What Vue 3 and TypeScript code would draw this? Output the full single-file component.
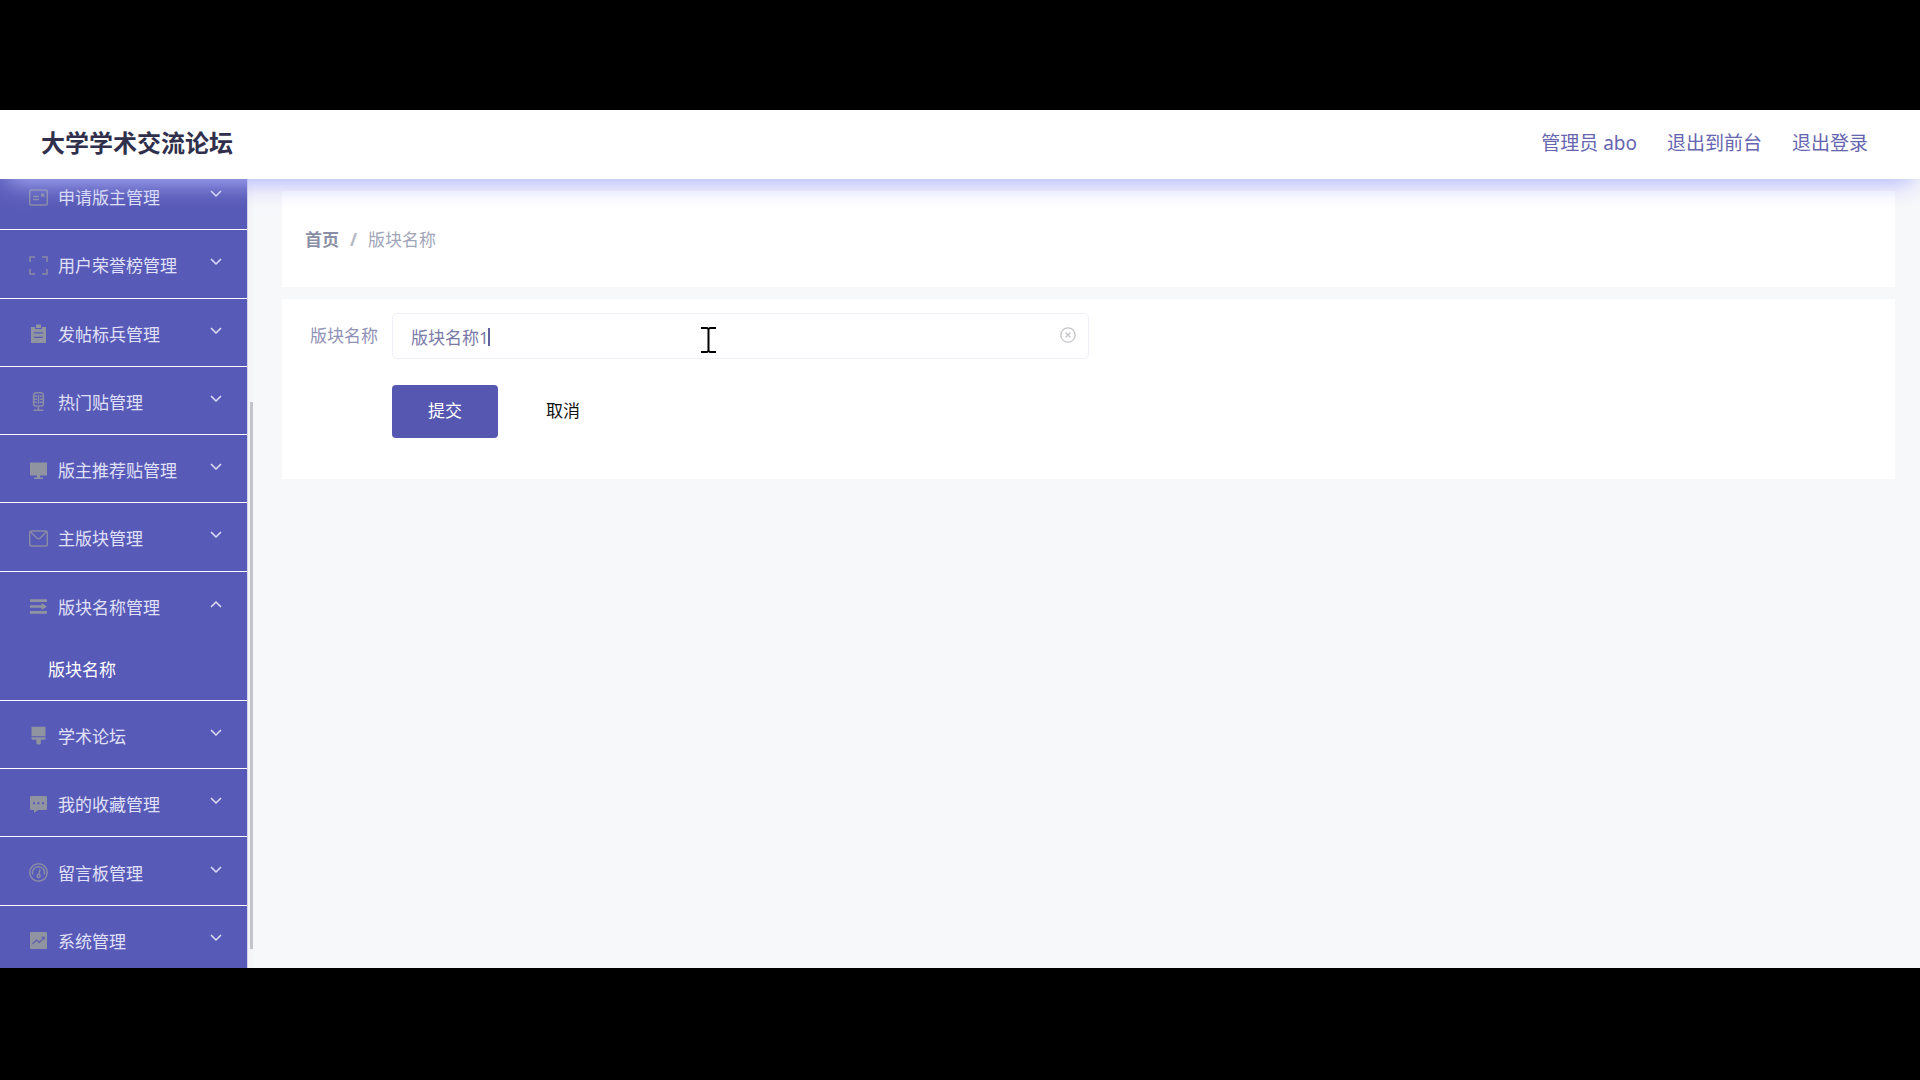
<script setup lang="ts">
import { ref } from 'vue'

interface MenuItem {
  title: string
  icon: string
  children?: string[]
}

const menu = ref<MenuItem[]>([
  { title: '申请版主管理', icon: 'postcard' },
  { title: '用户荣誉榜管理', icon: 'fullscreen' },
  { title: '发帖标兵管理', icon: 'order' },
  { title: '热门贴管理', icon: 'microphone' },
  { title: '版主推荐贴管理', icon: 'platform' },
  { title: '主版块管理', icon: 'message' },
  { title: '版块名称管理', icon: 'unfold', children: ['版块名称'] },
  { title: '学术论坛', icon: 'brush' },
  { title: '我的收藏管理', icon: 'comment' },
  { title: '留言板管理', icon: 'odometer' },
  { title: '系统管理', icon: 'marketing' },
])

const sectionName = ref('版块名称1')
</script>

<template>
  <div class="page">
    <div class="app">
      <header class="header">
        <h1 class="brand">大学学术交流论坛</h1>
        <nav class="links">
          <a href="#">管理员 abo</a>
          <a href="#">退出到前台</a>
          <a href="#">退出登录</a>
        </nav>
      </header>

      <div class="body">
        <aside class="sidebar">
          <ul class="menu">
            <li v-for="item in menu" :key="item.title" class="menu-item">
              <button type="button" class="menu-title" :aria-expanded="!!item.children">
                <svg class="icon" viewBox="0 0 19 19" aria-hidden="true">
                  <g v-if="item.icon === 'postcard'" class="line">
                    <rect x="0.7" y="2" width="17.6" height="15" rx="1.5" />
                    <path d="M4 8.5h6M4 11.5h6M12.8 6.2h1.8v1.8h-1.8z" />
                  </g>
                  <path v-else-if="item.icon === 'fullscreen'" class="line" d="M1 6V1h5M13 1h5v5M18 13v5h-5M6 18H1v-5" />
                  <path
                    v-else-if="item.icon === 'order'"
                    class="solid"
                    fill-rule="evenodd"
                    d="M2 3h4v2h7V3h4v16H2zM7 .5h5V4H7zM5 8.3v1.2h9V8.3zM5 12.8V14h9v-1.2z"
                  />
                  <g v-else-if="item.icon === 'microphone'" class="line">
                    <rect x="4.6" y="0.7" width="9.8" height="13.4" rx="2.4" />
                    <path d="M5 4.3h3M11 4.3h3M5 7.3h3M11 7.3h3M5 10.3h3M11 10.3h3M9.5 14v4M4.5 18.3h10M9.5 3v9" />
                  </g>
                  <path v-else-if="item.icon === 'platform'" class="solid" d="M1 1.500h17v13H1zM8 14.500h3v2h3v1.600H5v-1.600h3z" />
                  <g v-else-if="item.icon === 'message'" class="line">
                    <rect x="0.7" y="2" width="17.6" height="15" rx="1.5" />
                    <path d="M1.5 2.8l6.6 6.4q1.4 1.2 2.8 0l6.6-6.4" />
                  </g>
                  <path
                    v-else-if="item.icon === 'unfold'"
                    class="solid"
                    d="M1 2.300h17v2.600H1zM1 8.200h11.500V6l5.500 3.500-5.500 3.500v-2.200H1zM1 14.100h17v2.600H1z"
                  />
                  <path
                    v-else-if="item.icon === 'brush'"
                    class="solid"
                    d="M2.5.8h14v9.4h-14zM2.5 11.2h14v1.2q0 1.4-1.4 1.4h-3.3v3.4q0 1.4-1.4 1.4H8.6q-1.2 0-1.2-1.4v-3.4H3.9q-1.4 0-1.4-1.4z"
                  />
                  <path
                    v-else-if="item.icon === 'comment'"
                    class="solid"
                    fill-rule="evenodd"
                    d="M2.2 1h14.6q1.2 0 1.2 1.2v11.6q0 1.2-1.2 1.2H9l-4 3v-3H2.2q-1.2 0-1.2-1.2V2.2Q1 1 2.2 1zM4 7.2v2h2v-2zM8.5 7.2v2h2v-2zM13 7.2v2h2v-2z"
                  />
                  <g v-else-if="item.icon === 'odometer'" class="line">
                    <circle cx="9.5" cy="9.5" r="8.7" />
                    <path d="M3.8 11.5a6 6 0 1 1 11.400 0M10.800 6.500l-.8 4.800" />
                    <circle cx="9.700" cy="13" r="1.600" />
                  </g>
                  <g v-else>
                    <rect class="solid" x="1" y="1" width="17" height="17" rx="1" />
                    <path class="cut" d="M3.5 13l4-4 2.8 2.5 4.5-4.8M12.5 6.3l2.7-.1v2.6" />
                  </g>
                </svg>
                <span class="label">{{ item.title }}</span>
                <svg class="arrow" :class="{ open: item.children }" viewBox="0 0 12 8" aria-hidden="true">
                  <path d="M1 1l5 5 5-5" />
                </svg>
              </button>
              <a v-for="child in item.children" :key="child" href="#" class="submenu">{{ child }}</a>
            </li>
          </ul>
        </aside>
        <div class="scroll-track"><div class="scroll-thumb"></div></div>

        <main class="main">
          <nav class="card crumbs" aria-label="breadcrumb">
            <a href="#" class="home">首页</a>
            <span class="slash">/</span>
            <span>版块名称</span>
          </nav>

          <form class="card form" @submit.prevent>
            <div class="row">
              <label for="section-name">版块名称</label>
              <div class="field">
                <input id="section-name" v-model="sectionName" type="text" autocomplete="off" />
                <span class="caret"></span>
                <svg class="pointer" viewBox="0 0 15 26" aria-hidden="true">
                  <path d="M0 1h6l1.5 1L9 1h6M7.5 2v22M0 25h6l1.5-1L9 25h6" />
                </svg>
                <button type="button" class="clear" aria-label="清空" @click="sectionName = ''">
                  <svg viewBox="0 0 16 16" aria-hidden="true">
                    <circle cx="8" cy="8" r="7.2" />
                    <path d="M5.5 5.5l5 5M10.5 5.5l-5 5" />
                  </svg>
                </button>
              </div>
            </div>
            <div class="actions">
              <button type="submit" class="submit">提交</button>
              <button type="button" class="cancel">取消</button>
            </div>
          </form>
        </main>
      </div>
    </div>
  </div>
</template>

<style>
body {
  margin: 0;
  background: #000;
}
</style>

<style scoped>
.page,
.page * {
  box-sizing: border-box;
}

.page {
  height: 100vh;
  padding: 110px 0 112px;
  background: #000;
  font-family: "Noto Sans", "Noto Sans CJK SC", sans-serif;
  font-size: 17px;
  line-height: 24px;
}

.page button,
.page input {
  font: inherit;
}

.page a {
  text-decoration: none;
}

.app {
  display: flex;
  flex-direction: column;
  height: 100%;
  overflow: hidden;
  background: #f7f8fa;
}

.header {
  position: relative;
  z-index: 1;
  display: flex;
  flex: none;
  align-items: center;
  justify-content: space-between;
  height: 69px;
  padding: 0 52px 3px 41px;
  background: #fff;
  box-shadow: 0 11px 24px -7px #aeb2fc;
}

.brand {
  margin: 0;
  color: #30304d;
  font-size: 24px;
  font-weight: 700;
  line-height: 32px;
}

.links {
  display: flex;
  gap: 30px;
  font-size: 19px;
}

.links a {
  color: #6665b0;
}

.body {
  display: flex;
  flex: 1;
  min-height: 0;
}

.sidebar {
  flex: none;
  width: 248px;
  overflow: hidden;
  border-right: 1px solid #d4d4ee;
  background: #585ab7;
}

.menu {
  display: flex;
  flex-direction: column;
  height: calc(100% + 23px);
  margin: -17px 0 0;
  padding: 0;
  list-style: none;
}

.menu-item {
  display: flex;
  flex: 1 0 auto;
  flex-direction: column;
  border-bottom: 1px solid #fff;
}

.menu-title {
  display: flex;
  flex: 1 0 auto;
  align-items: center;
  min-height: 67px;
  padding: 3px 25px 0 29px;
  border: 0;
  background: none;
  color: #e0e1f8;
  text-align: left;
}

.icon {
  flex: none;
  width: 19px;
  height: 19px;
  margin-right: 10px;
}

.line {
  fill: none;
  stroke: #898ca4;
  stroke-width: 1.5;
}

.solid {
  fill: #9093a0;
}

.cut {
  fill: none;
  stroke: #6264b0;
  stroke-width: 1.3;
}

.label {
  flex: 1;
  padding-top: 2px;
}

.arrow {
  width: 12px;
  height: 8px;
  margin-bottom: 6px;
  fill: none;
  stroke: #e0e1f8;
  stroke-width: 1.5;
}

.arrow.open {
  transform: rotate(180deg);
}

.submenu {
  height: 61px;
  padding: 1px 0 0 48px;
  color: #fff;
  line-height: 60px;
}

.scroll-track {
  display: flex;
  flex: none;
  flex-direction: column;
  justify-content: flex-end;
  width: 5px;
  padding: 0 0 19px 2px;
  background: #f5f5f8;
}

.scroll-thumb {
  height: 71%;
  background: #c4c4cb;
}

.main {
  flex: 1;
  min-width: 0;
  padding: 12px 25px 0 29px;
}

.card {
  background: #fff;
}

.crumbs {
  display: flex;
  align-items: center;
  height: 96px;
  margin-bottom: 12px;
  padding: 2px 24px 0 23px;
  color: #a0a5b8;
}

.home {
  color: #8a8fa5;
  font-weight: 700;
}

.slash {
  margin: 0 11px;
  color: #b4b8c4;
  font-weight: 700;
}

.form {
  padding: 14px 0 41px;
}

.row {
  display: flex;
  align-items: center;
  width: 50%;
  padding-left: 28px;
}

.row label {
  flex: none;
  width: 82px;
  color: #9091b6;
}

.field {
  position: relative;
  flex: 1;
}

.field input {
  display: block;
  width: 100%;
  height: 46px;
  padding: 0 40px 0 18px;
  border: 1px solid #efeef9;
  border-radius: 5px;
  outline: none;
  background: #fff;
  color: #7a79a8;
}

.caret {
  position: absolute;
  top: 15px;
  left: 96px;
  width: 2px;
  height: 18px;
  background: #6261a0;
}

.pointer {
  position: absolute;
  top: 14px;
  left: 309px;
  width: 15px;
  height: 26px;
  fill: none;
  stroke: #000;
  stroke-width: 2;
}

.clear {
  position: absolute;
  top: 14px;
  right: 13px;
  width: 16px;
  height: 16px;
  padding: 0;
  border: 0;
  background: none;
}

.clear svg {
  display: block;
  fill: none;
  stroke: #c4c4c8;
  stroke-width: 1.3;
}

.actions {
  display: flex;
  margin-top: 26px;
  padding-left: 110px;
}

.submit,
.cancel {
  width: 106px;
  height: 53px;
  padding: 0 0 2px;
  border: 0;
  border-radius: 4px;
}

.submit {
  background: #5557b1;
  color: #fff;
}

.cancel {
  margin-left: 12px;
  background: #fff;
  color: #111;
}
</style>
